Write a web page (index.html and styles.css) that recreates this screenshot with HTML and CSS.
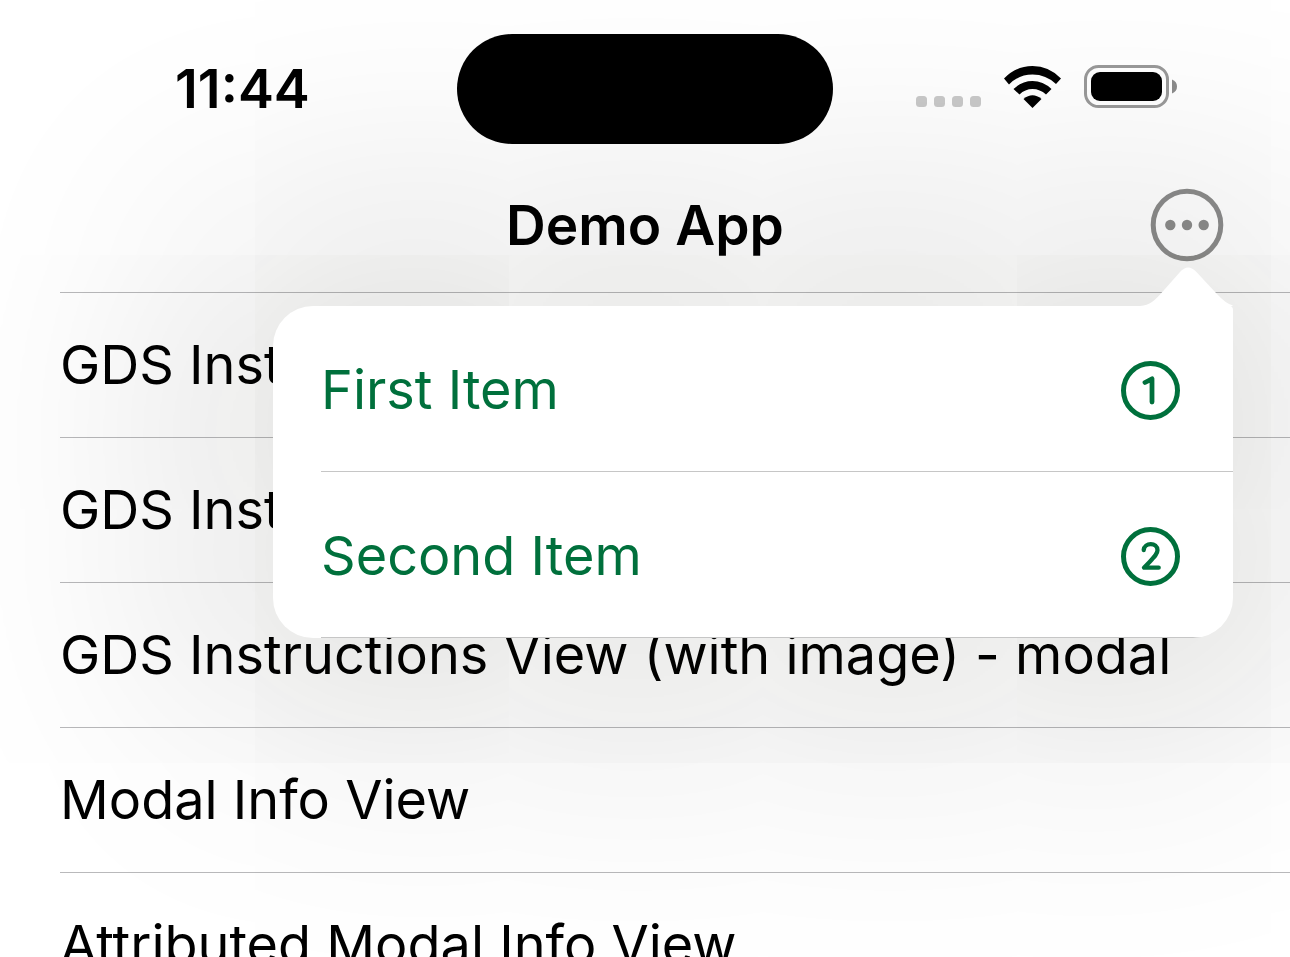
FILE: index.html
```html
<!DOCTYPE html>
<html lang="en">
<head>
<meta charset="utf-8">
<title>Demo App</title>
<link rel="stylesheet" href="styles.css">
</head>
<body>
<div class="screen">
  <header class="status">
    <time class="clock">11:44</time>
    <div class="island"></div>
    <div class="indicators">
      <svg class="signal" width="66" height="12" viewBox="0 0 66 12" aria-hidden="true"><g fill="#c9c9c9"><rect width="11" height="11" rx="3.500"/><rect x="18" width="11" height="11" rx="3.500"/><rect x="36" width="11" height="11" rx="3.500"/><rect x="54" width="11" height="11" rx="3.500"/></g></svg>
      <svg class="wifi" width="58" height="42" viewBox="0 0 58 42" aria-hidden="true"><path d="M0 12.500Q12 0 28.500 0T57 12.500L52 18Q42 8.500 28.500 8.500T5 18.500Z"/><path d="M9.500 23Q18 15 28.500 15T47.500 23L42 28.500Q36 23 28.500 23T15.500 28.500Z"/><path d="M19.500 33Q28.500 25.500 37.500 33L28.500 42Z"/></svg>
      <svg class="battery" width="94" height="44" viewBox="0 0 94 44" aria-hidden="true"><rect x="1.500" y="1.500" width="82" height="40" rx="13" fill="none" stroke="#999" stroke-width="3"/><rect x="7" y="7" width="71" height="29" rx="9"/><path d="M88 14.500Q93 16.500 93 21.500T88 28.500Z" fill="#8c8c8c"/></svg>
    </div>
  </header>
  <nav class="navbar">
    <h1 class="title">Demo App</h1>
    <div class="menu">
      <button class="more" type="button" aria-label="More" aria-expanded="true">
        <svg width="74" height="74" viewBox="0 0 74 74" aria-hidden="true"><circle cx="37" cy="37" r="33.800" fill="none" stroke="#8c8c8b" stroke-width="5"/><g fill="#8c8c8b"><circle cx="20.300" cy="37" r="5.200"/><circle cx="37" cy="37" r="5.200"/><circle cx="53.700" cy="37" r="5.200"/></g></svg>
      </button>
      <div class="popover">
        <svg class="arrow" width="93" height="44" viewBox="0 0 93 44" aria-hidden="true"><path d="M0 39C10 38.500 15 33 20.500 27L40 5Q48 -4 56.500 5L76 26Q86 37 93 38.500L90 40V44H0Z" fill="#fff"/></svg>
        <ul class="options">
          <li><button class="option" type="button"><span>First Item</span><svg width="60" height="60" viewBox="0 0 60 60" aria-hidden="true"><circle cx="29.500" cy="30.500" r="27" fill="none" stroke="#00703c" stroke-width="5"/><path d="M24 22.500L31 18.800V42" fill="none" stroke="#00703c" stroke-width="4.800" stroke-linecap="round" stroke-linejoin="round"/></svg></button></li>
          <li><button class="option" type="button"><span>Second Item</span><svg width="60" height="60" viewBox="0 0 60 60" aria-hidden="true"><circle cx="29.500" cy="30.500" r="27" fill="none" stroke="#00703c" stroke-width="5"/><path d="M22.700 24C23.200 16.200 36.500 16.200 36.500 24.300C36.500 29 31 33 23 41.700H37.700" fill="none" stroke="#00703c" stroke-width="4.300" stroke-linecap="round" stroke-linejoin="round"/></svg></button></li>
        </ul>
      </div>
    </div>
  </nav>
  <main>
    <ul class="list">
      <li>GDS Instructions View</li>
      <li>GDS Instructions View (with image)</li>
      <li>GDS Instructions View (with image) - modal</li>
      <li>Modal Info View</li>
      <li>Attributed Modal Info View</li>
    </ul>
  </main>
</div>
</body>
</html>
```
FILE: styles.css
```css
* { box-sizing: border-box; }
body { margin: 0; background: #fff; color: #000; font-family: Inter, sans-serif; }
.screen { height: 100vh; overflow: hidden; }
.status { display: grid; grid-template-columns: 1fr 376px 1fr; align-items: center; padding-top: 34px; }
.clock { padding-left: 175px; font-size: 54px; font-weight: 600; line-height: 110px; }
.island { position: relative; z-index: 2; height: 110px; border-radius: 55px; background: #000; }
.indicators { display: flex; justify-content: flex-end; align-items: center; gap: 22px; padding: 0 112px 4px 0; }
.signal { margin-top: 29px; }
.navbar { position: relative; display: grid; grid-template-columns: 1fr auto 1fr; align-items: center; height: 148px; padding: 13px 66px 0 66px; }
.title { grid-column: 2; margin: 0; font-size: 55px; font-weight: 600; line-height: 66px; }
.menu { display: flex; justify-content: flex-end; }
button { border: 0; padding: 0; background: none; font: inherit; color: inherit; }
.more { display: block; height: 74px; }
.more svg { display: block; }
.popover { position: absolute; top: 162px; right: 57px; z-index: 1; width: 960px; border-radius: 40px 4px 40px 40px; background: #fff; box-shadow: 0 0 300px 100px rgba(20, 20, 10, 0.12); }
.arrow { position: absolute; right: 0; top: -39px; }
.options, .list { list-style: none; margin: 0; padding: 0; }
.options { overflow: hidden; border-radius: 0 0 40px 40px; }
.options li { margin-left: 48px; border-bottom: 1px solid #c6c6c6; }
.option { display: flex; align-items: center; justify-content: space-between; width: 100%; height: 165px; padding: 2px 52px 0 0; color: #00703c; font-size: 54px; }
.list { padding-left: 60px; }
.list li { height: 145px; border-top: 1px solid rgba(60, 60, 67, 0.36); font-size: 54px; line-height: 144px; white-space: nowrap; }
```
